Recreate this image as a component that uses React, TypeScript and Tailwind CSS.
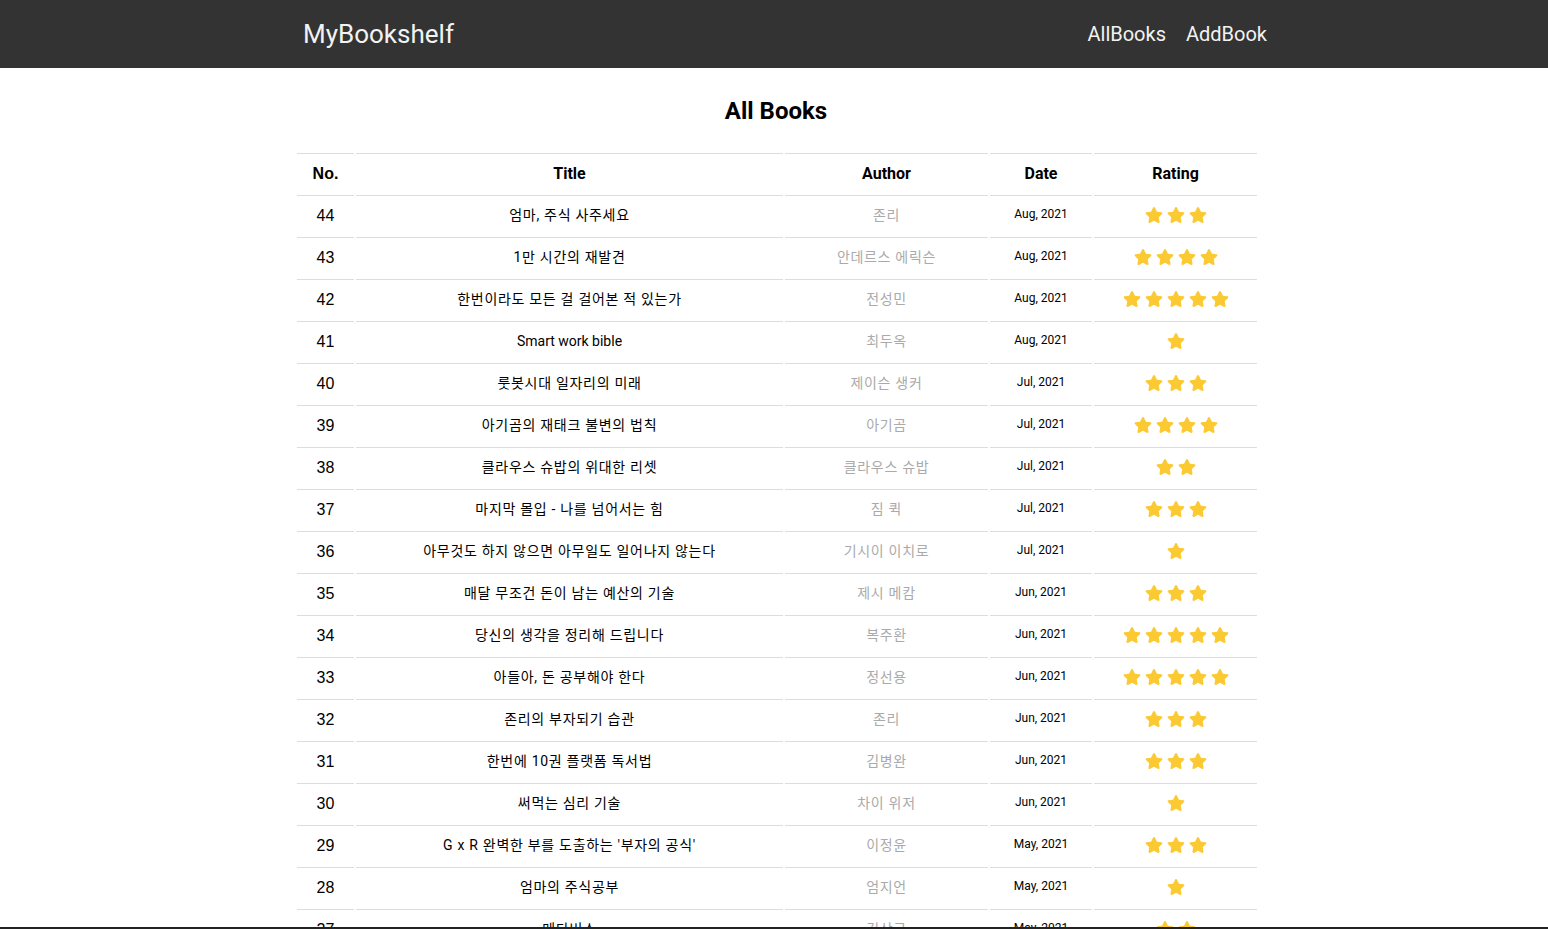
import { FaStar } from "react-icons/fa";

const books = [
  { no: 44, title: "엄마, 주식 사주세요", author: "존리", date: "Aug, 2021", rating: 3 },
  { no: 43, title: "1만 시간의 재발견", author: "안데르스 에릭슨", date: "Aug, 2021", rating: 4 },
  { no: 42, title: "한번이라도 모든 걸 걸어본 적 있는가", author: "전성민", date: "Aug, 2021", rating: 5 },
  { no: 41, title: "Smart work bible", author: "최두옥", date: "Aug, 2021", rating: 1 },
  { no: 40, title: "룻봇시대 일자리의 미래", author: "제이슨 생커", date: "Jul, 2021", rating: 3 },
  { no: 39, title: "아기곰의 재태크 불변의 법칙", author: "아기곰", date: "Jul, 2021", rating: 4 },
  { no: 38, title: "클라우스 슈밥의 위대한 리셋", author: "클라우스 슈밥", date: "Jul, 2021", rating: 2 },
  { no: 37, title: "마지막 몰입 - 나를 넘어서는 힘", author: "짐 퀵", date: "Jul, 2021", rating: 3 },
  { no: 36, title: "아무것도 하지 않으면 아무일도 일어나지 않는다", author: "기시이 이치로", date: "Jul, 2021", rating: 1 },
  { no: 35, title: "매달 무조건 돈이 남는 예산의 기술", author: "제시 메캄", date: "Jun, 2021", rating: 3 },
  { no: 34, title: "당신의 생각을 정리해 드립니다", author: "복주환", date: "Jun, 2021", rating: 5 },
  { no: 33, title: "아들아, 돈 공부해야 한다", author: "정선용", date: "Jun, 2021", rating: 5 },
  { no: 32, title: "존리의 부자되기 습관", author: "존리", date: "Jun, 2021", rating: 3 },
  { no: 31, title: "한번에 10권 플랫폼 독서법", author: "김병완", date: "Jun, 2021", rating: 3 },
  { no: 30, title: "써먹는 심리 기술", author: "차이 위저", date: "Jun, 2021", rating: 1 },
  { no: 29, title: "G x R 완벽한 부를 도출하는 '부자의 공식'", author: "이정윤", date: "May, 2021", rating: 3 },
  { no: 28, title: "엄마의 주식공부", author: "엄지언", date: "May, 2021", rating: 1 },
  { no: 27, title: "메타버스", author: "김상균", date: "May, 2021", rating: 2 },
];

const font = "font-['Roboto','Noto_Sans_CJK_KR',sans-serif]";

// korean text renders a bit wider in the original, so space it out
const hangul = (s: string) => (/[가-힣]/.test(s) ? "tracking-[0.7px]" : "");

const Stars = ({ count }: { count: number }) => (
  <div className="flex justify-center gap-[4px]">
    {Array.from({ length: count }).map((_, i) => (
      <FaStar key={i} size={18} color="#fbca33" />
    ))}
  </div>
);

export default function App() {
  return (
    <div className={`min-h-screen bg-white ${font} text-black`}>
      <nav className="h-[68px] bg-[#333333]">
        <div className="mx-auto flex h-full w-[986px] items-center justify-between pl-[22px]">
          <a className="text-[26px] text-[#f2f2f2]">MyBookshelf</a>
          <div className="flex gap-[20px] text-[20px] text-[#f2f2f2]">
            <a>AllBooks</a>
            <a>AddBook</a>
          </div>
        </div>
      </nav>

      <div className="mx-auto w-[966px] pl-[4px]">
        <h1 className="mt-[27px] mb-[26px] text-center text-[24px] leading-[32px] font-bold">
          All Books
        </h1>
        <table className="w-[964px] table-fixed border-separate border-spacing-x-[2px] border-spacing-y-0">
          <thead>
            <tr className="h-[42px] text-[16px] font-bold">
              <th className="w-[57px] border-t border-[#dddddd] pb-[2px] font-['Liberation_Sans',sans-serif]">No.</th>
              <th className="w-[427px] border-t border-[#dddddd] pb-[2px]">Title</th>
              <th className="w-[203px] border-t border-[#dddddd] pb-[2px]">Author</th>
              <th className="w-[102px] border-t border-[#dddddd] pb-[2px]">Date</th>
              <th className="border-t border-[#dddddd] pb-[2px]">Rating</th>
            </tr>
          </thead>
          <tbody>
            {books.map((b) => (
              <tr key={b.no} className="h-[42px] text-center">
                <td className="border-t border-[#dddddd] pb-[2px] font-['Liberation_Sans',sans-serif] text-[16px]">{b.no}</td>
                <td className={`border-t border-[#dddddd] pb-[2px] text-[14px] ${hangul(b.title)}`}>{b.title}</td>
                <td className={`border-t border-[#dddddd] pb-[2px] text-[14px] text-[#aaaaaa] ${hangul(b.author)}`}>{b.author}</td>
                <td className="border-t border-[#dddddd] pb-[6px] text-[12px]">{b.date}</td>
                <td className="border-t border-[#dddddd] pb-[3px]">
                  <Stars count={b.rating} />
                </td>
              </tr>
            ))}
          </tbody>
        </table>
      </div>

      <div className="fixed inset-x-0 bottom-0 h-[2px] bg-[#222222]" />
    </div>
  );
}
